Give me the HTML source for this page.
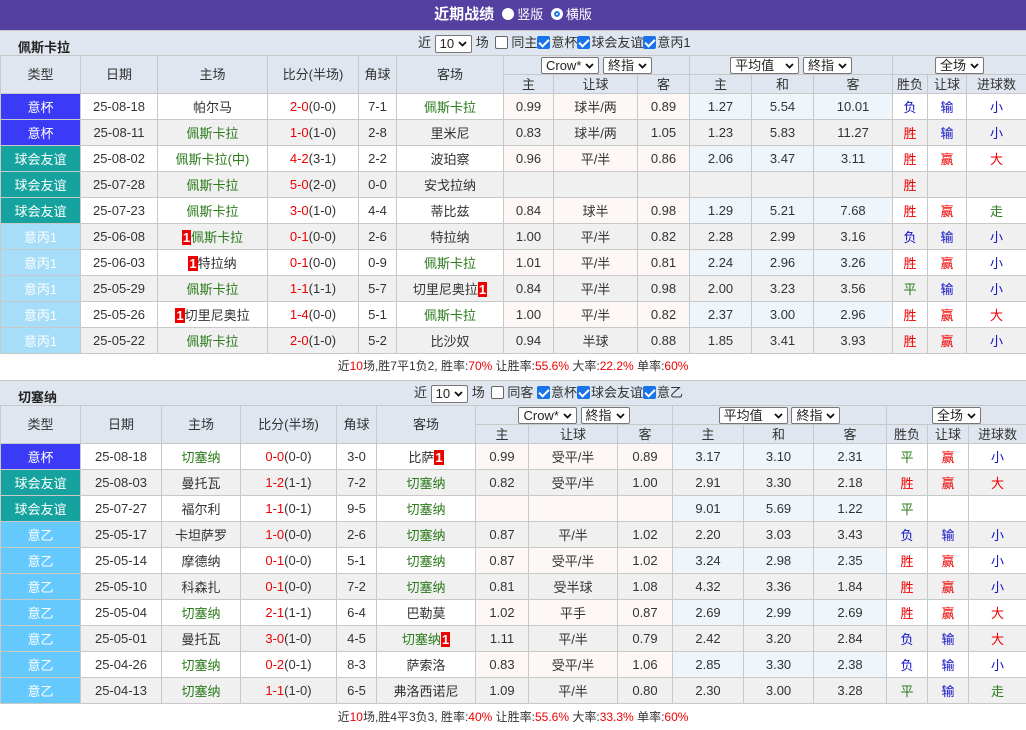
<!DOCTYPE html>
<html><head><meta charset="utf-8">
<style>
*{box-sizing:border-box}
body{margin:0;width:1026px;height:730px;overflow:hidden;background:#fff;font:13px "Liberation Sans","Noto Sans CJK SC",sans-serif;color:#333;position:relative}
.title{position:absolute;left:0;top:0;width:1026px;height:30px;background:#5340a0;color:#fff;text-align:center;line-height:30px;font-size:15px;font-weight:bold}
.rad{display:inline-block;width:12px;height:12px;border-radius:50%;background:#fff;vertical-align:-1px;margin:0 3px 0 4px}
.rad.on{border:3px solid #fff;box-shadow:inset 0 0 0 2px #1a73e8}
.title span.l{font-weight:normal;font-size:13px}
.sec{position:absolute;left:0;width:1026px;height:25px;background:#dfe6ef;border-top:1px solid #c8c8c8}
.sec b{position:absolute;left:18px;top:6px;font-size:13px;color:#222}
.ctl{position:absolute;top:3px;font-size:13px;color:#333;white-space:nowrap;line-height:18px}
.sel{display:inline-block;border:1px solid #777;background:#fff;height:18px;line-height:16px;padding:0 4px;font-size:13px;border-radius:2px;vertical-align:middle;color:#222}
.sel svg{margin-left:4px;vertical-align:1px}
.cb{display:inline-block;width:13px;height:13px;border:1px solid #666;border-radius:2px;vertical-align:-2px;background:#fff;margin:0 3px}
.cb.on{background:#1a73e8;border-color:#1a73e8;margin:0 1px 0 0;position:relative}
.cb.on:after{content:"";position:absolute;left:3px;top:0px;width:4px;height:8px;border:solid #fff;border-width:0 2px 2px 0;transform:rotate(45deg)}
table{position:absolute;left:0;border-collapse:collapse;table-layout:fixed;width:1026px}
td{border:1px solid #c8c8c8;text-align:center;padding:0;white-space:nowrap;overflow:hidden}
tr.h td{background:#dfe6ef;color:#333;height:19px;line-height:17px}
tr.h td .sel{height:17px;line-height:15px}
tr.d td{height:26px}
tr.e td{background:#f0f0f0}
td.o{background:#fdf8f6}
td.p{background:#eef6fb}
tr.e td.o,tr.e td.p{background:#f0f0f0}
td.t{color:#fff}
tr.e td.a,td.a{background:#3b3bf7}
tr.e td.b,td.b{background:#16a39f}
tr.e td.c,td.c{background:#a6ddf8}
tr.e td.dd,td.dd{background:#66c9fe}
.g{color:#2a7a1a}.r{color:#e00}.bl{color:#1212c8}
.k{background:#e00;color:#fff;font-weight:bold;padding:0 1px}
.sum{position:absolute;left:0;width:1026px;height:26px;line-height:26px;text-align:center;font-size:12px;color:#333}
.sum span{color:#e00}
</style></head><body>
<div class="title">近期战绩 <span class="l"><span class="rad"></span>竖版 <span class="rad on"></span>横版</span></div>

<div class="sec" style="top:30px"><b>佩斯卡拉</b>
<div class="ctl" style="left:418px">近 <span class="sel">10<svg width="9" height="6" viewBox="0 0 9 6"><path d="M1 1l3.5 3.5L8 1" fill="none" stroke="#111" stroke-width="1.8"/></svg></span> 场 <span class="cb"></span>同主<span class="cb on"></span>意杯<span class="cb on"></span>球会友谊<span class="cb on"></span>意丙1</div></div>

<table style="top:55px">
<colgroup><col style="width:80px"><col style="width:77px"><col style="width:110px"><col style="width:91px"><col style="width:38px"><col style="width:107px"><col style="width:50px"><col style="width:84px"><col style="width:52px"><col style="width:62px"><col style="width:62px"><col style="width:79px"><col style="width:35px"><col style="width:39px"><col style="width:60px"></colgroup>
<tr class="h"><td rowspan="2">类型</td><td rowspan="2">日期</td><td rowspan="2">主场</td><td rowspan="2">比分(半场)</td><td rowspan="2">角球</td><td rowspan="2">客场</td>
<td colspan="3"><span class="sel">Crow*<svg width="9" height="6" viewBox="0 0 9 6"><path d="M1 1l3.5 3.5L8 1" fill="none" stroke="#111" stroke-width="1.8"/></svg></span> <span class="sel">終指<svg width="9" height="6" viewBox="0 0 9 6"><path d="M1 1l3.5 3.5L8 1" fill="none" stroke="#111" stroke-width="1.8"/></svg></span></td><td colspan="3"><span class="sel">平均值 &nbsp;<svg width="9" height="6" viewBox="0 0 9 6"><path d="M1 1l3.5 3.5L8 1" fill="none" stroke="#111" stroke-width="1.8"/></svg></span> <span class="sel">終指<svg width="9" height="6" viewBox="0 0 9 6"><path d="M1 1l3.5 3.5L8 1" fill="none" stroke="#111" stroke-width="1.8"/></svg></span></td><td colspan="3"><span class="sel">全场<svg width="9" height="6" viewBox="0 0 9 6"><path d="M1 1l3.5 3.5L8 1" fill="none" stroke="#111" stroke-width="1.8"/></svg></span></td></tr>
<tr class="h"><td>主</td><td>让球</td><td>客</td><td>主</td><td>和</td><td>客</td><td>胜负</td><td>让球</td><td>进球数</td></tr>
<tr class="d"><td class="t a">意杯</td><td>25-08-18</td><td>帕尔马</td><td><span class="r">2-0</span>(0-0)</td><td>7-1</td><td class="g">佩斯卡拉</td><td class="o">0.99</td><td class="o">球半/两</td><td class="o">0.89</td><td class="p">1.27</td><td class="p">5.54</td><td class="p">10.01</td><td class="bl">负</td><td class="bl">输</td><td class="bl">小</td></tr>
<tr class="d e"><td class="t a">意杯</td><td>25-08-11</td><td class="g">佩斯卡拉</td><td><span class="r">1-0</span>(1-0)</td><td>2-8</td><td>里米尼</td><td class="o">0.83</td><td class="o">球半/两</td><td class="o">1.05</td><td class="p">1.23</td><td class="p">5.83</td><td class="p">11.27</td><td class="r">胜</td><td class="bl">输</td><td class="bl">小</td></tr>
<tr class="d"><td class="t b">球会友谊</td><td>25-08-02</td><td class="g">佩斯卡拉(中)</td><td><span class="r">4-2</span>(3-1)</td><td>2-2</td><td>波珀察</td><td class="o">0.96</td><td class="o">平/半</td><td class="o">0.86</td><td class="p">2.06</td><td class="p">3.47</td><td class="p">3.11</td><td class="r">胜</td><td class="r">赢</td><td class="r">大</td></tr>
<tr class="d e"><td class="t b">球会友谊</td><td>25-07-28</td><td class="g">佩斯卡拉</td><td><span class="r">5-0</span>(2-0)</td><td>0-0</td><td>安戈拉纳</td><td class="o"></td><td class="o"></td><td class="o"></td><td class="p"></td><td class="p"></td><td class="p"></td><td class="r">胜</td><td></td><td></td></tr>
<tr class="d"><td class="t b">球会友谊</td><td>25-07-23</td><td class="g">佩斯卡拉</td><td><span class="r">3-0</span>(1-0)</td><td>4-4</td><td>蒂比兹</td><td class="o">0.84</td><td class="o">球半</td><td class="o">0.98</td><td class="p">1.29</td><td class="p">5.21</td><td class="p">7.68</td><td class="r">胜</td><td class="r">赢</td><td class="g">走</td></tr>
<tr class="d e"><td class="t c">意丙1</td><td>25-06-08</td><td class="g"><span class="k">1</span>佩斯卡拉</td><td><span class="r">0-1</span>(0-0)</td><td>2-6</td><td>特拉纳</td><td class="o">1.00</td><td class="o">平/半</td><td class="o">0.82</td><td class="p">2.28</td><td class="p">2.99</td><td class="p">3.16</td><td class="bl">负</td><td class="bl">输</td><td class="bl">小</td></tr>
<tr class="d"><td class="t c">意丙1</td><td>25-06-03</td><td><span class="k">1</span>特拉纳</td><td><span class="r">0-1</span>(0-0)</td><td>0-9</td><td class="g">佩斯卡拉</td><td class="o">1.01</td><td class="o">平/半</td><td class="o">0.81</td><td class="p">2.24</td><td class="p">2.96</td><td class="p">3.26</td><td class="r">胜</td><td class="r">赢</td><td class="bl">小</td></tr>
<tr class="d e"><td class="t c">意丙1</td><td>25-05-29</td><td class="g">佩斯卡拉</td><td><span class="r">1-1</span>(1-1)</td><td>5-7</td><td>切里尼奥拉<span class="k">1</span></td><td class="o">0.84</td><td class="o">平/半</td><td class="o">0.98</td><td class="p">2.00</td><td class="p">3.23</td><td class="p">3.56</td><td class="g">平</td><td class="bl">输</td><td class="bl">小</td></tr>
<tr class="d"><td class="t c">意丙1</td><td>25-05-26</td><td><span class="k">1</span>切里尼奥拉</td><td><span class="r">1-4</span>(0-0)</td><td>5-1</td><td class="g">佩斯卡拉</td><td class="o">1.00</td><td class="o">平/半</td><td class="o">0.82</td><td class="p">2.37</td><td class="p">3.00</td><td class="p">2.96</td><td class="r">胜</td><td class="r">赢</td><td class="r">大</td></tr>
<tr class="d e"><td class="t c">意丙1</td><td>25-05-22</td><td class="g">佩斯卡拉</td><td><span class="r">2-0</span>(1-0)</td><td>5-2</td><td>比沙奴</td><td class="o">0.94</td><td class="o">半球</td><td class="o">0.88</td><td class="p">1.85</td><td class="p">3.41</td><td class="p">3.93</td><td class="r">胜</td><td class="r">赢</td><td class="bl">小</td></tr>
</table>
<div class="sum" style="top:353px">近<span>10</span>场,胜7平1负2, 胜率:<span>70%</span> 让胜率:<span>55.6%</span> 大率:<span>22.2%</span> 单率:<span>60%</span></div>

<div class="sec" style="top:380px"><b>切塞纳</b>
<div class="ctl" style="left:414px">近 <span class="sel">10<svg width="9" height="6" viewBox="0 0 9 6"><path d="M1 1l3.5 3.5L8 1" fill="none" stroke="#111" stroke-width="1.8"/></svg></span> 场 <span class="cb"></span>同客 <span class="cb on"></span>意杯<span class="cb on"></span>球会友谊<span class="cb on"></span>意乙</div></div>

<table style="top:405px">
<colgroup><col style="width:80px"><col style="width:81px"><col style="width:79px"><col style="width:96px"><col style="width:40px"><col style="width:99px"><col style="width:53px"><col style="width:89px"><col style="width:55px"><col style="width:71px"><col style="width:70px"><col style="width:73px"><col style="width:41px"><col style="width:41px"><col style="width:58px"></colgroup>
<tr class="h"><td rowspan="2">类型</td><td rowspan="2">日期</td><td rowspan="2">主场</td><td rowspan="2">比分(半场)</td><td rowspan="2">角球</td><td rowspan="2">客场</td>
<td colspan="3"><span class="sel">Crow*<svg width="9" height="6" viewBox="0 0 9 6"><path d="M1 1l3.5 3.5L8 1" fill="none" stroke="#111" stroke-width="1.8"/></svg></span> <span class="sel">終指<svg width="9" height="6" viewBox="0 0 9 6"><path d="M1 1l3.5 3.5L8 1" fill="none" stroke="#111" stroke-width="1.8"/></svg></span></td><td colspan="3"><span class="sel">平均值 &nbsp;<svg width="9" height="6" viewBox="0 0 9 6"><path d="M1 1l3.5 3.5L8 1" fill="none" stroke="#111" stroke-width="1.8"/></svg></span> <span class="sel">終指<svg width="9" height="6" viewBox="0 0 9 6"><path d="M1 1l3.5 3.5L8 1" fill="none" stroke="#111" stroke-width="1.8"/></svg></span></td><td colspan="3"><span class="sel">全场<svg width="9" height="6" viewBox="0 0 9 6"><path d="M1 1l3.5 3.5L8 1" fill="none" stroke="#111" stroke-width="1.8"/></svg></span></td></tr>
<tr class="h"><td>主</td><td>让球</td><td>客</td><td>主</td><td>和</td><td>客</td><td>胜负</td><td>让球</td><td>进球数</td></tr>
<tr class="d"><td class="t a">意杯</td><td>25-08-18</td><td class="g">切塞纳</td><td><span class="r">0-0</span>(0-0)</td><td>3-0</td><td>比萨<span class="k">1</span></td><td class="o">0.99</td><td class="o">受平/半</td><td class="o">0.89</td><td class="p">3.17</td><td class="p">3.10</td><td class="p">2.31</td><td class="g">平</td><td class="r">赢</td><td class="bl">小</td></tr>
<tr class="d e"><td class="t b">球会友谊</td><td>25-08-03</td><td>曼托瓦</td><td><span class="r">1-2</span>(1-1)</td><td>7-2</td><td class="g">切塞纳</td><td class="o">0.82</td><td class="o">受平/半</td><td class="o">1.00</td><td class="p">2.91</td><td class="p">3.30</td><td class="p">2.18</td><td class="r">胜</td><td class="r">赢</td><td class="r">大</td></tr>
<tr class="d"><td class="t b">球会友谊</td><td>25-07-27</td><td>福尔利</td><td><span class="r">1-1</span>(0-1)</td><td>9-5</td><td class="g">切塞纳</td><td class="o"></td><td class="o"></td><td class="o"></td><td class="p">9.01</td><td class="p">5.69</td><td class="p">1.22</td><td class="g">平</td><td></td><td></td></tr>
<tr class="d e"><td class="t dd">意乙</td><td>25-05-17</td><td>卡坦萨罗</td><td><span class="r">1-0</span>(0-0)</td><td>2-6</td><td class="g">切塞纳</td><td class="o">0.87</td><td class="o">平/半</td><td class="o">1.02</td><td class="p">2.20</td><td class="p">3.03</td><td class="p">3.43</td><td class="bl">负</td><td class="bl">输</td><td class="bl">小</td></tr>
<tr class="d"><td class="t dd">意乙</td><td>25-05-14</td><td>摩德纳</td><td><span class="r">0-1</span>(0-0)</td><td>5-1</td><td class="g">切塞纳</td><td class="o">0.87</td><td class="o">受平/半</td><td class="o">1.02</td><td class="p">3.24</td><td class="p">2.98</td><td class="p">2.35</td><td class="r">胜</td><td class="r">赢</td><td class="bl">小</td></tr>
<tr class="d e"><td class="t dd">意乙</td><td>25-05-10</td><td>科森扎</td><td><span class="r">0-1</span>(0-0)</td><td>7-2</td><td class="g">切塞纳</td><td class="o">0.81</td><td class="o">受半球</td><td class="o">1.08</td><td class="p">4.32</td><td class="p">3.36</td><td class="p">1.84</td><td class="r">胜</td><td class="r">赢</td><td class="bl">小</td></tr>
<tr class="d"><td class="t dd">意乙</td><td>25-05-04</td><td class="g">切塞纳</td><td><span class="r">2-1</span>(1-1)</td><td>6-4</td><td>巴勒莫</td><td class="o">1.02</td><td class="o">平手</td><td class="o">0.87</td><td class="p">2.69</td><td class="p">2.99</td><td class="p">2.69</td><td class="r">胜</td><td class="r">赢</td><td class="r">大</td></tr>
<tr class="d e"><td class="t dd">意乙</td><td>25-05-01</td><td>曼托瓦</td><td><span class="r">3-0</span>(1-0)</td><td>4-5</td><td class="g">切塞纳<span class="k">1</span></td><td class="o">1.11</td><td class="o">平/半</td><td class="o">0.79</td><td class="p">2.42</td><td class="p">3.20</td><td class="p">2.84</td><td class="bl">负</td><td class="bl">输</td><td class="r">大</td></tr>
<tr class="d"><td class="t dd">意乙</td><td>25-04-26</td><td class="g">切塞纳</td><td><span class="r">0-2</span>(0-1)</td><td>8-3</td><td>萨索洛</td><td class="o">0.83</td><td class="o">受平/半</td><td class="o">1.06</td><td class="p">2.85</td><td class="p">3.30</td><td class="p">2.38</td><td class="bl">负</td><td class="bl">输</td><td class="bl">小</td></tr>
<tr class="d e"><td class="t dd">意乙</td><td>25-04-13</td><td class="g">切塞纳</td><td><span class="r">1-1</span>(1-0)</td><td>6-5</td><td>弗洛西诺尼</td><td class="o">1.09</td><td class="o">平/半</td><td class="o">0.80</td><td class="p">2.30</td><td class="p">3.00</td><td class="p">3.28</td><td class="g">平</td><td class="bl">输</td><td class="g">走</td></tr>
</table>
<div class="sum" style="top:704px">近<span>10</span>场,胜4平3负3, 胜率:<span>40%</span> 让胜率:<span>55.6%</span> 大率:<span>33.3%</span> 单率:<span>60%</span></div>
</body></html>
